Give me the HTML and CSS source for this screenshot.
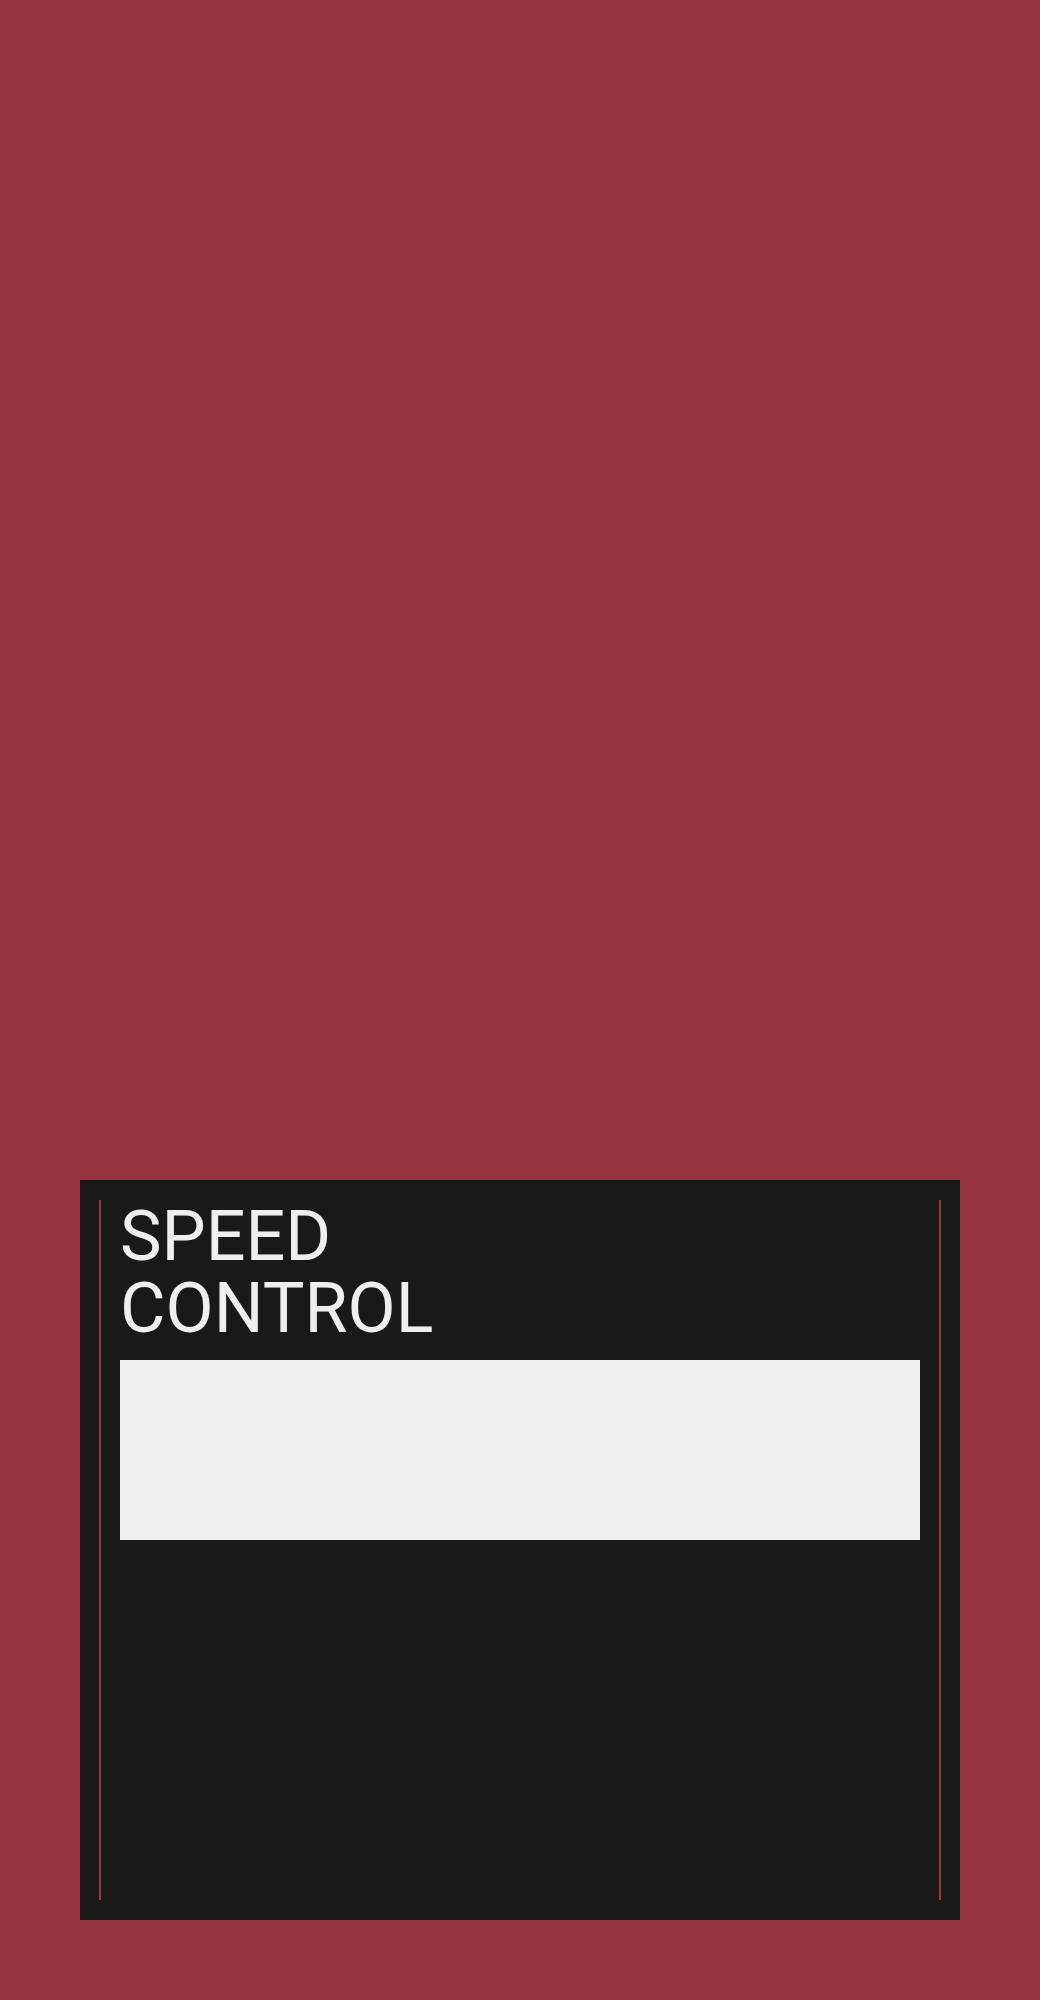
FILE: index.html
```html
<!DOCTYPE html>
<html lang="en">
<head>
<meta charset="utf-8">
<title>Speed Control</title>
<link rel="stylesheet" href="styles.css">
</head>
<body>
<main class="page">
  <section class="panel">
    <div class="panel-inner">
      <h1 class="title">SPEED<br>CONTROL</h1>
      <div class="display"></div>
    </div>
  </section>
</main>
</body>
</html>
```

FILE: styles.css
```css
html, body {
  margin: 0;
  padding: 0;
}

body {
  background: #963441;
  font-family: Roboto, "Liberation Sans", sans-serif;
}

.page {
  min-height: 2000px;
  box-sizing: border-box;
  display: flex;
  flex-direction: column;
  justify-content: flex-end;
  padding: 0 80px 80px;
}

.panel {
  background: #191919;
  height: 740px;
  box-sizing: border-box;
  padding: 20px 19px;
  display: flex;
}

.panel-inner {
  flex: 1;
  border-left: 2px solid #963441;
  border-right: 2px solid #963441;
  padding: 0 19px;
}

.title {
  margin: 0;
  color: #eeeeee;
  font-weight: 400;
  font-size: 70px;
  line-height: 72px;
  letter-spacing: 0;
}

.display {
  margin-top: 16px;
  height: 180px;
  background: #eeeeee;
}
```
